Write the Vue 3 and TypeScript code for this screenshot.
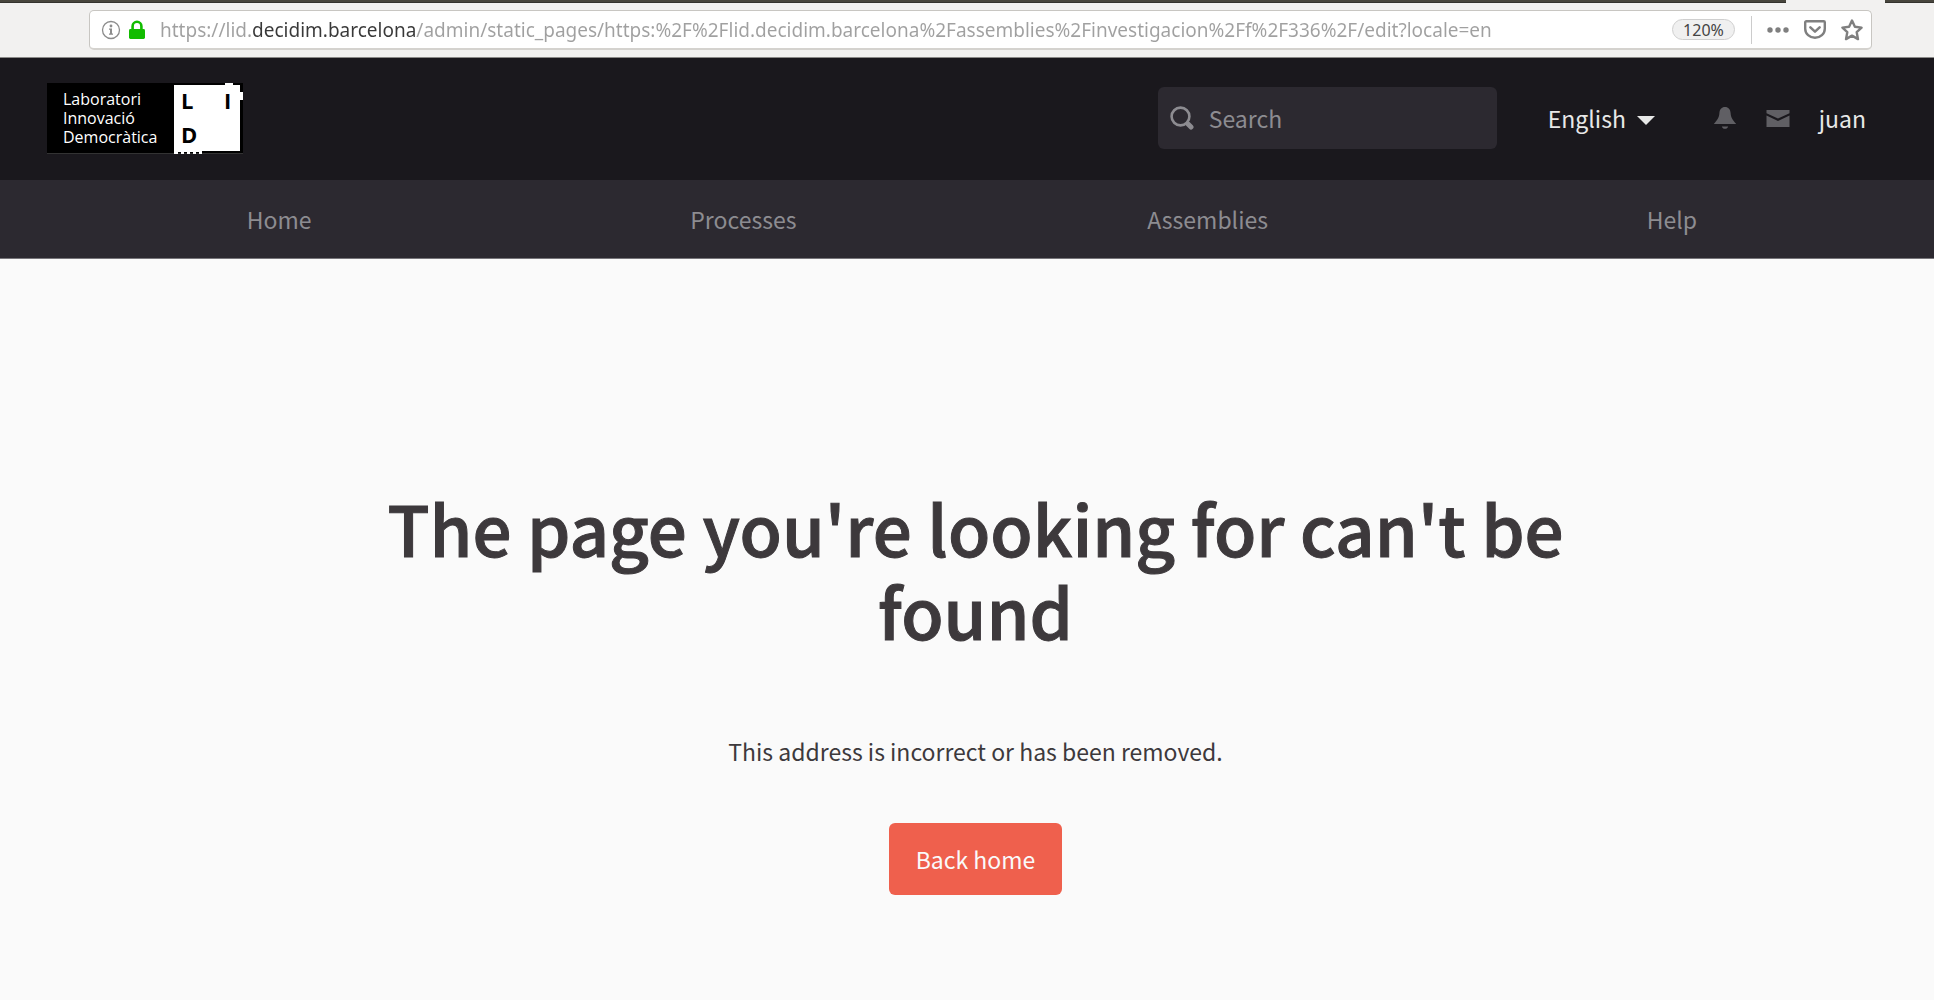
<script setup lang="ts">
import { ref } from 'vue'

interface NavItem {
  label: string
  href: string
}

const address = ref(
  'https://lid.decidim.barcelona/admin/static_pages/https:%2F%2Flid.decidim.barcelona%2Fassemblies%2Finvestigacion%2Ff%2F336%2F/edit?locale=en',
)
const query = ref('')
const locale = ref('en')
const navItems: NavItem[] = [
  { label: 'Home', href: '#home' },
  { label: 'Processes', href: '#processes' },
  { label: 'Assemblies', href: '#assemblies' },
  { label: 'Help', href: '#help' },
]
</script>

<template>
  <div class="window">
    <div class="browser">
      <div class="tabs"><span class="tabs-rest"></span><span class="tab-active"></span><span class="tabs-end"></span></div>
      <form class="urlbar" @submit.prevent>
        <svg class="info" viewBox="0 0 20 20" aria-hidden="true">
          <circle cx="10" cy="10" r="8.5" fill="none" stroke="#8c8c8c" stroke-width="1.3" />
          <circle cx="10" cy="6" r="1.4" fill="#8c8c8c" />
          <path d="M8 8.6h3v5h1v1.2H8v-1.2h1V9.8H8z" fill="#8c8c8c" />
        </svg>
        <svg class="lock" viewBox="0 0 18 20" aria-hidden="true">
          <path d="M4.6 10V6.2a4.4 4.4 0 0 1 8.8 0V10" fill="none" stroke="#12bc00" stroke-width="2.6" />
          <rect x="1" y="9" width="16" height="10" rx="1.4" fill="#12bc00" />
        </svg>
        <input v-model="address" class="address" type="text" aria-label="Address" spellcheck="false" />
        <button class="zoom" type="button">120%</button>
        <span class="divider"></span>
        <button class="tool" type="button" aria-label="Page actions">
          <svg viewBox="0 0 24 24"><g fill="#7f7f7f"><circle cx="4" cy="12" r="2.7" /><circle cx="12" cy="12" r="2.7" /><circle cx="20" cy="12" r="2.7" /></g></svg>
        </button>
        <button class="tool" type="button" aria-label="Save to Pocket">
          <svg viewBox="0 0 24 24" fill="none" stroke="#7f7f7f" stroke-linecap="round" stroke-linejoin="round">
            <path d="M3.3 3.2h17.4a1.1 1.1 0 0 1 1.1 1.1v6.4a9.8 9 0 0 1-19.6 0V4.3a1.1 1.1 0 0 1 1.1-1.1z" stroke-width="2.4" />
            <path d="M7.4 9.4l4.6 4.2 4.6-4.2" stroke-width="2.6" />
          </svg>
        </button>
        <button class="tool" type="button" aria-label="Bookmark this page">
          <svg viewBox="0 0 24 24"><path d="M12 2.6l2.9 6.2 6.7.8-4.9 4.6 1.3 6.9-6-3.5-6 3.5 1.3-6.9-4.9-4.6 6.7-.8z" fill="none" stroke="#7f7f7f" stroke-width="2.4" stroke-linejoin="round" /></svg>
        </button>
      </form>
    </div>

    <header class="topbar">
      <a class="logo" href="#home" aria-label="Laboratori Innovació Democràtica">
        <svg viewBox="0 0 196 71">
          <rect width="196" height="70" fill="#000" />
          <rect y="70" width="196" height="1" fill="#333" />
          <path d="M127 2h51V0h8v2h7v7h3v8h-3v51h-38v3h-3v-2h-3v2h-3v-2h-3v2h-3v-2h-3v2h-3v-2h-3v2h-4z" fill="#fff" />
          <g class="logo-name">
            <text x="16" y="22">Laboratori</text>
            <text x="16" y="41">Innovació</text>
            <text x="16" y="60">Democràtica</text>
          </g>
          <g class="logo-mark">
            <text x="134" y="26">L</text>
            <text x="177" y="26">I</text>
            <text x="134" y="60">D</text>
          </g>
        </svg>
      </a>
      <form class="search" role="search" @submit.prevent>
        <svg viewBox="0 0 24 24" aria-hidden="true">
          <circle cx="10.5" cy="10.5" r="8.9" fill="none" stroke="#8d8c91" stroke-width="2.6" />
          <path d="M18 18l3 3" stroke="#8d8c91" stroke-width="5" stroke-linecap="round" />
        </svg>
        <input v-model="query" type="search" placeholder="Search" aria-label="Search" />
      </form>
      <div class="language">
        <select v-model="locale" aria-label="Language">
          <option value="en">English</option>
        </select>
        <svg viewBox="0 0 18 13" aria-hidden="true"><path d="M0 4h18l-9 9z" fill="#e8e8e8" /></svg>
      </div>
      <a class="icon" href="#notifications" aria-label="Notifications">
        <svg viewBox="0 0 24 24"><path d="M12 1c-3.4 0-5.4 2.5-5.6 6-.2 4.5-1.8 6.5-5.6 11h22.4c-3.8-4.5-5.4-6.500-5.600-11-.2-3.500-2.200-6-5.600-6zM8.800 20.500h6.400c-.6 1.600-1.600 2.300-3.200 2.300s-2.600-.7-3.200-2.300z" fill="#605f64" /></svg>
      </a>
      <a class="icon" href="#conversations" aria-label="Conversations">
        <svg viewBox="0 0 24 24"><path d="M.5 4h23v3.200L12 12.500.5 7.200zM.5 9.500L12 15l11.500-5.500V21H.5z" fill="#605f64" /></svg>
      </a>
      <a class="user" href="#account">juan</a>
    </header>

    <nav class="mainnav" aria-label="Main">
      <a v-for="item in navItems" :key="item.label" :href="item.href">{{ item.label }}</a>
    </nav>

    <main class="content">
      <h1>The page you're looking for can't be found</h1>
      <p>This address is incorrect or has been removed.</p>
      <a class="back" href="#home">Back home</a>
    </main>
  </div>
</template>

<style>
body {
  margin: 0;
  background: #fafafa;
}
</style>

<style scoped>
.window {
  font-family: 'Noto Sans CJK SC', 'Noto Sans', sans-serif;
  font-size: 23px;
  line-height: 32px;
  color: #3d393c;
}
.window * {
  box-sizing: border-box;
}
svg {
  display: block;
  flex: none;
}
a {
  color: inherit;
  text-decoration: none;
}
button {
  padding: 0;
  border: 0;
  background: none;
  cursor: pointer;
}
.browser {
  height: 58px;
  background: #f2f1f0;
  border-bottom: 1px solid #8b8a88;
}
.tabs {
  display: flex;
  height: 3px;
  margin-bottom: 7px;
}
.tabs-rest,
.tabs-end {
  background: #48463d;
  border-bottom: 1px solid #34332e;
}
.tabs-rest {
  flex: 1;
}
.tab-active {
  width: 99px;
}
.tabs-end {
  width: 49px;
}
.urlbar {
  display: flex;
  align-items: center;
  height: 40px;
  margin: 0 62px 0 89px;
  padding: 0 7px 0 11px;
  background: #fff;
  border: 1px solid #c8c6c2;
  border-bottom: 2px solid #d4d2ce;
  border-radius: 5px;
}
.info {
  width: 20px;
  height: 20px;
  margin-right: 7px;
}
.lock {
  width: 18px;
  height: 20px;
  margin-right: 14px;
}
.address {
  flex: 1;
  min-width: 0;
  height: 32px;
  padding: 0;
  border: 0;
  outline: 0;
  font-family: 'Noto Sans', sans-serif;
  font-size: 19px;
  color: transparent;
  background: linear-gradient(90deg, #a0a0a0 92px, #383838 92px, #383838 256px, #a0a0a0 256px);
  background-clip: text;
  -webkit-background-clip: text;
}
.zoom {
  width: 63px;
  height: 21px;
  border: 1px solid #cfcfcf;
  border-radius: 11px;
  background: #f0f0f0;
  font-family: 'Noto Sans', sans-serif;
  font-size: 16px;
  line-height: 18px;
  color: #444;
}
.divider {
  width: 1px;
  height: 28px;
  margin: 0 14px 0 16px;
  background: #ccc;
}
.tool {
  width: 24px;
  height: 24px;
}
.tool + .tool {
  margin-left: 13px;
}
.topbar {
  display: flex;
  align-items: center;
  height: 122px;
  padding: 0 68px 2px 47px;
  background: #1a181d;
  color: #e8e8e8;
}
.logo {
  margin-right: auto;
}
.logo svg {
  width: 196px;
  height: 71px;
}
.logo-name {
  font-family: 'Open Sans', sans-serif;
  font-size: 16px;
  font-weight: 500;
  fill: #fff;
}
.logo-mark {
  font-family: 'Open Sans', sans-serif;
  font-size: 22px;
  font-weight: 700;
  fill: #000;
}
.search {
  display: flex;
  align-items: center;
  gap: 15px;
  width: 339px;
  height: 62px;
  margin-right: 51px;
  padding: 0 12px;
  background: #2c2930;
  border-radius: 6px;
}
.search svg {
  width: 24px;
  height: 24px;
}
.search input {
  flex: 1;
  min-width: 0;
  padding: 0;
  border: 0;
  outline: 0;
  background: none;
  font: inherit;
  color: #e8e8e8;
}
.search input::placeholder {
  color: #8d8c91;
}
.language {
  display: flex;
  align-items: center;
  gap: 10px;
  margin-right: 58px;
}
.language select {
  appearance: none;
  padding: 0;
  border: 0;
  background: none;
  font: inherit;
  color: inherit;
}
.language svg {
  width: 18px;
  height: 13px;
}
.icon {
  margin-right: 29px;
}
.icon svg,
.tool svg {
  width: 24px;
  height: 24px;
}
.mainnav {
  display: grid;
  grid-template-columns: repeat(4, 1fr);
  height: 79px;
  padding: 0 30px 0 47px;
  background: #2c2930;
  color: #8d8c91;
  border-bottom: 1px solid #77757a;
}
.mainnav a {
  display: flex;
  align-items: center;
  justify-content: center;
}
.content {
  display: flex;
  flex-direction: column;
  align-items: center;
  padding: 227px 30px 92px 47px;
  text-align: center;
}
h1 {
  max-width: 1238px;
  margin: 0 0 83px;
  font-size: 69px;
  font-weight: 500;
  line-height: 83px;
  -webkit-text-stroke: 1px currentColor;
}
p {
  margin: 0 0 56px;
}
.back {
  padding: 20px 27px;
  background: #ef604d;
  border-radius: 6px;
  color: #fafafa;
}
</style>
